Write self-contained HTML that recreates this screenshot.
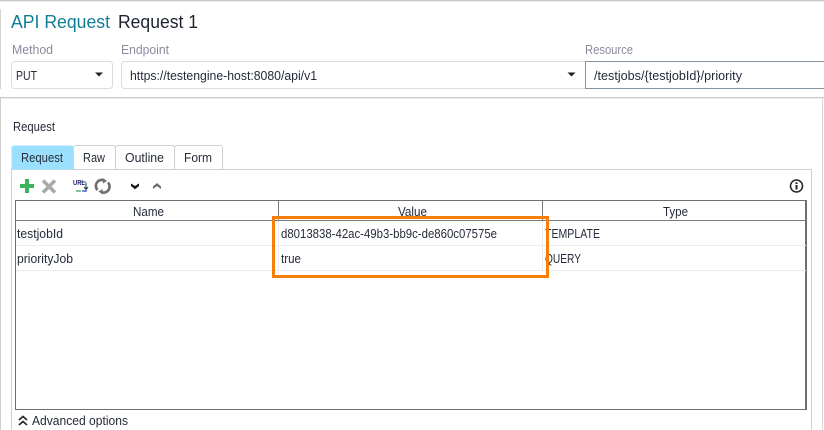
<!DOCTYPE html>
<html><head><meta charset="utf-8"><style>
html,body{margin:0;padding:0;background:#fff;width:824px;height:430px;overflow:hidden}
svg{display:block}
text{font-family:"Liberation Sans",sans-serif;font-size:12.5px;fill:#262b3a}
.l{fill:#8b8b9f}
</style></head><body>
<svg width="824" height="430" viewBox="0 0 824 430" xmlns="http://www.w3.org/2000/svg">
<rect width="824" height="430" fill="#fff"/>
<!-- outer frames -->
<rect x="0" y="0" width="824" height="1.300" fill="#c8c8c8"/>
<rect x="0" y="9" width="1" height="80" fill="#d4d4d4"/>
<rect x="0" y="97" width="824" height="1.300" fill="#c8c8c8"/>
<rect x="0" y="98" width="1" height="332" fill="#cfcfcf"/>
<rect x="822" y="98" width="1" height="332" fill="#d8d8d8"/>
<!-- title -->
<text x="11" y="28" style="font-size:18px;fill:#0f7e93" textLength="99" lengthAdjust="spacingAndGlyphs">API Request</text>
<text x="118" y="28" style="font-size:18px;fill:#1c2230" textLength="80" lengthAdjust="spacingAndGlyphs">Request 1</text>
<!-- labels -->
<text x="12" y="54" class="l" textLength="41" lengthAdjust="spacingAndGlyphs">Method</text>
<text x="121" y="54" class="l" textLength="48" lengthAdjust="spacingAndGlyphs">Endpoint</text>
<text x="585" y="54" class="l" textLength="48" lengthAdjust="spacingAndGlyphs">Resource</text>
<!-- combos -->
<rect x="11.500" y="61.500" width="101" height="27" rx="3" fill="#fff" stroke="#dcdcdc"/>
<text x="16" y="80" textLength="21" lengthAdjust="spacingAndGlyphs">PUT</text>
<path d="M95 72.500h8l-4 4z" fill="#222"/>
<path d="M585 61.500H124.500a3 3 0 0 0-3 3v21a3 3 0 0 0 3 3H585" fill="#fff" stroke="#dcdcdc"/>
<text x="130" y="80" textLength="187" lengthAdjust="spacingAndGlyphs">https://testengine-host:8080/api/v1</text>
<path d="M567.500 72.500h8l-4 4z" fill="#222"/>
<path d="M824 61.500H585.500V88.500H824" fill="#fff" stroke="#8492a3"/>
<text x="594" y="80" textLength="148" lengthAdjust="spacingAndGlyphs">/testjobs/{testjobId}/priority</text>
<!-- Request section -->
<text x="13" y="131" textLength="42" lengthAdjust="spacingAndGlyphs">Request</text>
<!-- panel -->
<path d="M11.500 430V169.500H811.500V430" fill="none" stroke="#d0d0d0"/>
<!-- tabs -->
<path d="M11.500 169.500V148a2.500 2.500 0 0 1 2.500-2.500h57a2.500 2.500 0 0 1 2.500 2.500v21.500z" fill="#9be1ff"/>
<path d="M73.500 169V148a2.500 2.500 0 0 1 2.500-2.500h37a2.500 2.500 0 0 1 2.500 2.500v21" fill="#fff" stroke="#d0d0d0"/>
<path d="M115.500 169V148a2.500 2.500 0 0 1 2.500-2.500h54a2.500 2.500 0 0 1 2.500 2.500v21" fill="#fff" stroke="#d0d0d0"/>
<path d="M174.500 169V148a2.500 2.500 0 0 1 2.500-2.500h43a2.500 2.500 0 0 1 2.500 2.500v21" fill="#fff" stroke="#d0d0d0"/>
<text x="21" y="162" textLength="42" lengthAdjust="spacingAndGlyphs">Request</text>
<text x="83" y="162" textLength="22" lengthAdjust="spacingAndGlyphs">Raw</text>
<text x="125" y="162" textLength="39" lengthAdjust="spacingAndGlyphs">Outline</text>
<text x="184" y="162" textLength="28" lengthAdjust="spacingAndGlyphs">Form</text>
<!-- toolbar icons -->
<path d="M20 186h14M27 179v14" stroke="#3fb35c" stroke-width="4" fill="none"/>
<path d="M43 180.500l12 12M55 180.500l-12 12" stroke="#a9a9a9" stroke-width="3.500" fill="none"/>
<text x="73" y="185" style="font-size:7px;font-weight:bold;fill:#26267a" textLength="12" lengthAdjust="spacingAndGlyphs">URL</text>
<path d="M86 183v6M84 187l2 2.500 2-2.500M81 182h5" stroke="#1f4d4d" stroke-width="1.100" fill="none"/>
<path d="M76 191h5" stroke="#2fa34a" stroke-width="1.200"/>
<path d="M82 191h5" stroke="#2a3bd0" stroke-width="1.200"/>
<path d="M97.500 190a6 6 0 0 1 7-9.500M108 182.500a6 6 0 0 1-7 9.500" stroke="#6f6f6f" stroke-width="2.600" fill="none"/>
<path d="M102.500 178l4.500 3-4 2.500zM103 194.500l-4.500-3 4-2.500z" fill="#6f6f6f"/>
<path d="M131 183.500l4 2.500 4-2.500v2.500l-4 3.200-4-3.200z" fill="#111"/>
<path d="M153 189l4-3 4 3v-2.500l-4-3.500-4 3.500z" fill="#6a6a6a"/>
<circle cx="796.500" cy="186" r="6" fill="none" stroke="#222" stroke-width="1.500"/>
<rect x="795.500" y="185" width="2" height="4.500" fill="#222"/>
<rect x="795.500" y="182.300" width="2" height="1.700" fill="#222"/>
<!-- table -->
<rect x="15.500" y="200.500" width="791" height="209" fill="#fff" stroke="#6f6f6f"/>
<rect x="805" y="200" width="2" height="210" fill="#6f6f6f"/>
<rect x="16" y="220" width="790" height="1" fill="#7a7a7a"/>
<rect x="278" y="201" width="1" height="19" fill="#7a7a7a"/>
<rect x="542" y="201" width="1" height="19" fill="#7a7a7a"/>
<rect x="16" y="245" width="790" height="1" fill="#ededed"/>
<rect x="16" y="270" width="790" height="1" fill="#ededed"/>
<rect x="278" y="221" width="1" height="50" fill="#ededed"/>
<rect x="542" y="221" width="1" height="50" fill="#ededed"/>
<text x="133" y="216" textLength="31" lengthAdjust="spacingAndGlyphs">Name</text>
<text x="398" y="216" textLength="29" lengthAdjust="spacingAndGlyphs">Value</text>
<text x="663" y="216" textLength="25" lengthAdjust="spacingAndGlyphs">Type</text>
<text x="17" y="238" textLength="46" lengthAdjust="spacingAndGlyphs">testjobId</text>
<text x="17" y="263" textLength="56" lengthAdjust="spacingAndGlyphs">priorityJob</text>
<text x="281" y="238" textLength="216" lengthAdjust="spacingAndGlyphs">d8013838-42ac-49b3-bb9c-de860c07575e</text>
<text x="281" y="263" textLength="20" lengthAdjust="spacingAndGlyphs">true</text>
<text x="545" y="238" textLength="55" lengthAdjust="spacingAndGlyphs">TEMPLATE</text>
<text x="545" y="263" textLength="36" lengthAdjust="spacingAndGlyphs">QUERY</text>
<!-- highlight -->
<rect x="273.500" y="217.500" width="274" height="59" fill="none" stroke="#f57f0a" stroke-width="3"/>
<!-- advanced -->
<path d="M19 420l4-3.500 4 3.500M19 425l4-3.500 4 3.500" stroke="#222" stroke-width="1.600" fill="none"/>
<text x="32" y="425" textLength="96" lengthAdjust="spacingAndGlyphs">Advanced options</text>
</svg>
</body></html>
